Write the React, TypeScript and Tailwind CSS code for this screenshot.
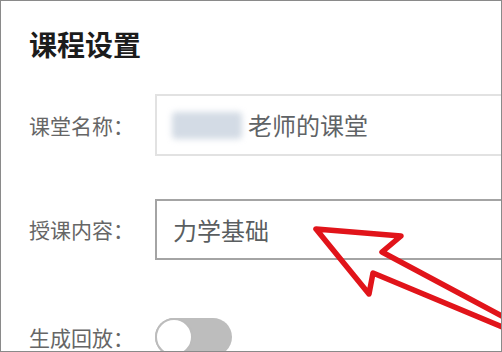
import React from 'react';

const font = { fontFamily: '"Noto Sans CJK SC", "Noto Sans", sans-serif' };

function Row({ label, children, className }: { label: string; children: React.ReactNode; className?: string }) {
    return (
        <div className={`flex items-center ${className ?? ''}`}>
            <div className="w-[126px] shrink-0 text-[21px] leading-none text-[#666]">{label}</div>
            {children}
        </div>
    );
}

export default function App() {
    return (
        <div
            className="relative w-[502px] h-[352px] overflow-hidden bg-white border border-[#8a8a8a] pl-[28px] pt-[25px]"
            style={font}
        >
            <h1 className="h-[36px] text-[28px] leading-[36px] font-bold text-[#1c1c1c]">课程设置</h1>

            <Row label="课堂名称：" className="mt-[32px]">
                <div className="flex items-center w-[400px] h-[62px] shrink-0 border-2 border-[#e2e2e2] pl-[15px]">
                    <div className="w-[70px] h-[27px] rounded bg-[#d3dbe5] blur-[3px]" />
                    <span className="ml-[6px] text-[24px] leading-none text-[#5f6366]">老师的课堂</span>
                </div>
            </Row>

            <Row label="授课内容：" className="mt-[43px]">
                <div className="flex items-center w-[400px] h-[61px] shrink-0 border-2 border-[#a4a4a4] pl-[16px]">
                    <span className="text-[24px] leading-none text-[#5a5e60]">力学基础</span>
                </div>
            </Row>

            <Row label="生成回放：" className="mt-[58px]">
                <div className="relative w-[77px] h-[38px] shrink-0 rounded-full bg-[#bdbdbd]">
                    <div className="absolute left-0 top-0 w-[38px] h-[38px] rounded-full bg-white border-2 border-[#bcbcbc]" />
                </div>
            </Row>

            {/* red annotation arrow */}
            <svg className="absolute left-0 top-0 pointer-events-none" width="502" height="352" viewBox="0 0 502 352">
                <polygon
                    points="315,228 400,235 381,251 540,336 540,342 372,272 368,293"
                    fill="none"
                    stroke="#e1141a"
                    strokeWidth="5.5"
                    strokeLinejoin="round"
                    style={{ filter: 'blur(0.6px)' }}
                />
            </svg>
        </div>
    );
}
